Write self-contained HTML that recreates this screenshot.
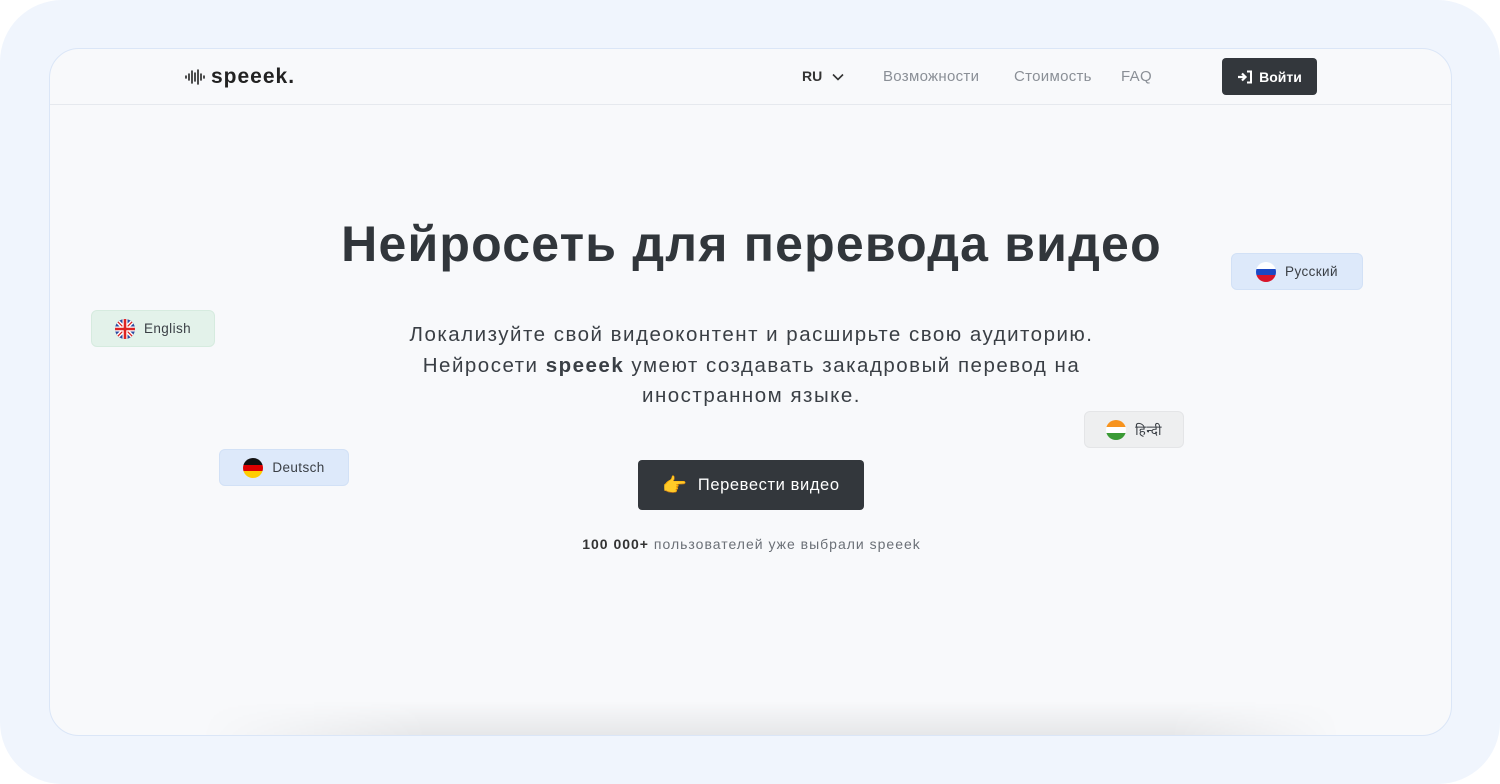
<!DOCTYPE html>
<html><head><meta charset="utf-8"><style>
*{margin:0;padding:0;box-sizing:border-box}
body{width:1500px;height:784px;background:#fff;font-family:"Liberation Sans",sans-serif;overflow:hidden;position:relative}
.outer{position:absolute;left:0;top:0;width:1500px;height:784px;background:#f0f5fd;border-radius:62px}
.card{position:absolute;left:49px;top:48px;width:1403px;height:688px;background:#f8f9fb;border:1.5px solid #dbe6f7;border-radius:30px;overflow:hidden}
.hdr{position:absolute;left:0;top:0;width:100%;height:56px;border-bottom:1px solid #e6e9ee}
.abs{position:absolute;white-space:nowrap}
.nav{font-size:15px;color:#8a8f96;top:19px;letter-spacing:0.3px}
.btn{background:#33373c;color:#fff;border-radius:4px}
.tag{position:absolute;height:37px;border-radius:6px;font-size:13.5px;color:#3a3f45;display:flex;align-items:center;justify-content:center;gap:9px;letter-spacing:0.4px}
.flag{width:20px;height:20px;border-radius:50%;overflow:hidden;display:inline-block}
.shadow{position:absolute;left:150px;right:110px;bottom:0;height:34px;background:linear-gradient(to bottom,rgba(0,0,0,0),rgba(0,0,0,0.07));-webkit-mask-image:linear-gradient(to right,transparent,#000 20%,#000 85%,transparent);mask-image:linear-gradient(to right,transparent,#000 20%,#000 85%,transparent)}
</style></head><body>
<div class="outer"></div>
<div class="card">
 <div class="shadow"></div>
 <div class="hdr">
  <div class="abs" style="left:135px;top:16px;display:flex;align-items:center;gap:6px">
   <svg width="20" height="16" viewBox="0 0 20 16"><g stroke="#222" stroke-width="1.6" stroke-linecap="round"><line x1="1" y1="7" x2="1" y2="9"/><line x1="4" y1="5" x2="4" y2="11"/><line x1="7" y1="2" x2="7" y2="14"/><line x1="10" y1="4" x2="10" y2="12"/><line x1="13" y1="1" x2="13" y2="15"/><line x1="16" y1="5" x2="16" y2="11"/><line x1="19" y1="7" x2="19" y2="9"/></g></svg>
   <span style="font-size:21px;font-weight:bold;color:#222;letter-spacing:1px">speeek.</span>
  </div>
  <div class="abs" style="left:752px;top:19px;font-size:14px;font-weight:bold;color:#333">RU <svg width="12" height="8" viewBox="0 0 12 8" style="margin-left:6px"><path d="M1 1.5L6 6.5L11 1.5" stroke="#333" stroke-width="1.6" fill="none"/></svg></div>
  <div class="abs nav" style="left:833px">Возможности</div>
  <div class="abs nav" style="left:964px">Стоимость</div>
  <div class="abs nav" style="left:1071px">FAQ</div>
  <div class="abs btn" style="left:1172px;top:9px;width:95px;height:37px;font-size:14px;font-weight:bold;display:flex;align-items:center;justify-content:center;gap:6px">
   <svg width="16" height="14" viewBox="0 0 16 14"><path d="M1 7H8M5 3.5L8.5 7L5 10.5" stroke="#fff" stroke-width="2.2" fill="none"/><path d="M10 1.5H14V12.5H10" stroke="#fff" stroke-width="2" fill="none"/></svg>Войти
  </div>
 </div>
 <div class="abs" style="left:0;width:1403px;top:166px;text-align:center;font-size:50px;font-weight:bold;color:#31363b;letter-spacing:1.2px">Нейросеть для перевода видео</div>
 <div class="abs" style="left:0;width:1403px;top:271px;text-align:center;font-size:20.5px;line-height:30.5px;color:#3a3f45;letter-spacing:1.5px">Локализуйте свой видеоконтент и расширьте свою аудиторию.<br>Нейросети <b>speeek</b> умеют создавать закадровый перевод на<br>иностранном языке.</div>
 <div class="abs btn" style="left:588px;top:411px;width:226px;height:50px;font-size:16.5px;display:flex;align-items:center;justify-content:center;gap:10px;letter-spacing:0.6px"><span style="font-size:20px">👉</span>Перевести видео</div>
 <div class="abs" style="left:0;width:1403px;top:487px;text-align:center;font-size:14px;color:#6b7077;letter-spacing:1px"><b style="color:#333">100 000+</b> пользователей уже выбрали speeek</div>

 <div class="tag" style="left:41px;top:261px;width:124px;background:#e3f2ea;border:1px solid #d6ebdf"><svg class="flag" viewBox="0 0 20 20"><rect width="20" height="20" fill="#2b4aa0"/><path d="M0 0L20 20M20 0L0 20" stroke="#fff" stroke-width="4"/><path d="M0 0L20 20M20 0L0 20" stroke="#d22" stroke-width="1.3"/><path d="M10 0V20M0 10H20" stroke="#fff" stroke-width="5"/><path d="M10 0V20M0 10H20" stroke="#d22" stroke-width="2.6"/></svg>English</div>
 <div class="tag" style="left:169px;top:400px;width:130px;background:#dde9fa;border:1px solid #d2e1f6"><svg class="flag" viewBox="0 0 20 20"><rect width="20" height="7" fill="#111"/><rect y="7" width="20" height="6" fill="#d00"/><rect y="13" width="20" height="7" fill="#fc0"/></svg>Deutsch</div>
 <div class="tag" style="left:1181px;top:204px;width:132px;background:#dde9fa;border:1px solid #d2e1f6"><svg class="flag" viewBox="0 0 20 20"><rect width="20" height="7" fill="#fff"/><rect y="7" width="20" height="6" fill="#1c48c4"/><rect y="13" width="20" height="7" fill="#d8142a"/></svg>Русский</div>
 <div class="tag" style="left:1034px;top:362px;width:100px;background:#eeeff0;border:1px solid #e4e5e7;font-family:'Liberation Sans','Noto Sans CJK SC',sans-serif"><svg class="flag" viewBox="0 0 20 20"><rect width="20" height="7" fill="#f7931e"/><rect y="7" width="20" height="6" fill="#fff"/><rect y="13" width="20" height="7" fill="#3a9a35"/></svg>हिन्दी</div>
</div>
</body></html>
